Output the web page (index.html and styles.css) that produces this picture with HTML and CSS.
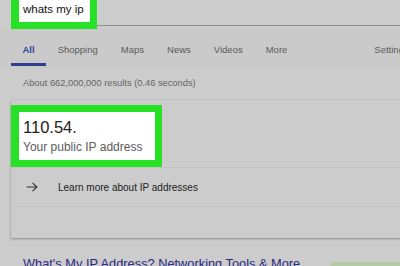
FILE: index.html
```html
<!DOCTYPE html>
<html lang="en">
<head>
    <meta charset="UTF-8">
    <meta name="viewport" content="width=device-width, initial-scale=1.0">
    <title>whats my ip</title>
    <link rel="stylesheet" href="styles.css">
</head>
<body>
    <header class="search-bar">
        <div class="query-box">whats my ip</div>
        <div class="search-line"></div>
    </header>

    <nav class="tabs">
        <a class="tab active">All</a>
        <a class="tab">Shopping</a>
        <a class="tab">Maps</a>
        <a class="tab">News</a>
        <a class="tab">Videos</a>
        <a class="tab">More</a>
        <a class="tab settings">Settings</a>
    </nav>

    <p class="stats">About 662,000,000 results (0.46 seconds)</p>

    <section class="card">
        <div class="answer">
            <div class="highlight">
                <div class="ip">110.54.</div>
                <div class="ip-label">Your public IP address</div>
            </div>
        </div>
        <div class="learn-row">
            <svg class="arrow" width="12" height="10" viewBox="0 0 12 10">
                <path d="M0.5 5 H11 M6.5 0.8 L11 5 L6.5 9.2" fill="none" stroke="#333" stroke-width="1.1"/>
            </svg>
            <span>Learn more about IP addresses</span>
        </div>
        <div class="card-foot"></div>
    </section>

    <div class="result">
        <a class="result-link">What's My IP Address? Networking Tools &amp; More</a>
        <div class="result-badge"></div>
    </div>
</body>
</html>
```

FILE: styles.css
```css
*{
    box-sizing: border-box;
}

body{
    margin: 0;
    width: 400px;
    height: 266px;
    overflow: hidden;
    background-color: #cccccc;
    font-family: "Liberation Sans", Arial, sans-serif;
}

/* search box at the top */
.search-bar{
    display: flex;
    align-items: flex-start;
    height: 29px;
}

.query-box{
    margin-left: 11px;
    width: 86px;
    height: 29px;
    padding: 2px 0 0 4px;
    background-color: #ffffff;
    border: 7px solid #27e127;
    border-top: none;
    border-left-width: 8px;
    font-size: 11.5px;
    line-height: 14px;
    color: #111;
}

.search-line{
    flex: 1;
    height: 26px;
    border-bottom: 1px solid #929292;
}

/* tabs */
.tabs{
    display: flex;
    padding-left: 11px;
    border-bottom: 1px solid #c6c6c6;
    background-color: #cacaca;
    white-space: nowrap;
}

.tab{
    padding: 14px 11.5px 6px 11.5px;
    font-size: 9.5px;
    line-height: 14px;
    color: #5a5a5a;
    border-bottom: 3px solid transparent;
}

.tab.active{
    color: #34489c;
    font-weight: bold;
    border-bottom-color: #2d3f8e;
}

.tab.settings{
    margin-left: 64px;
}

.stats{
    margin: 9px 0 0 23px;
    font-size: 9.3px;
    line-height: 14px;
    color: #666;
}

/* answer card */
.card{
    margin: 10px -20px 0 11px;
    box-shadow: 0 1px 2px rgba(0,0,0,0.28), 0 0 0 1px rgba(0,0,0,0.04);
}

.answer{
    padding-top: 5px;
    border-bottom: 1px solid #c4c4c4;
}

.highlight{
    width: 151px;
    padding: 6px 0 6px 4px;
    background-color: #ffffff;
    border: 7px solid #27e127;
    border-left-width: 8px;
}

.ip{
    font-size: 16.5px;
    line-height: 18px;
    color: #222;
}

.ip-label{
    margin-top: 4px;
    font-size: 12px;
    line-height: 14px;
    color: #5c5c5c;
}

.learn-row{
    display: flex;
    align-items: center;
    height: 39px;
    padding-left: 15px;
    border-bottom: 1px solid #c4c4c4;
    font-size: 10px;
    color: #222;
}

.arrow{
    margin-right: 20px;
}

.card-foot{
    height: 31px;
}

/* next result */
.result{
    display: flex;
    align-items: flex-start;
    margin-top: 18px;
    padding-left: 23px;
}

.result-link{
    font-size: 12.8px;
    line-height: 16px;
    color: #2b2b82;
    white-space: nowrap;
}

.result-badge{
    margin: 6px 0 0 auto;
    width: 69px;
    height: 10px;
    background-color: #b4cca6;
}
```
